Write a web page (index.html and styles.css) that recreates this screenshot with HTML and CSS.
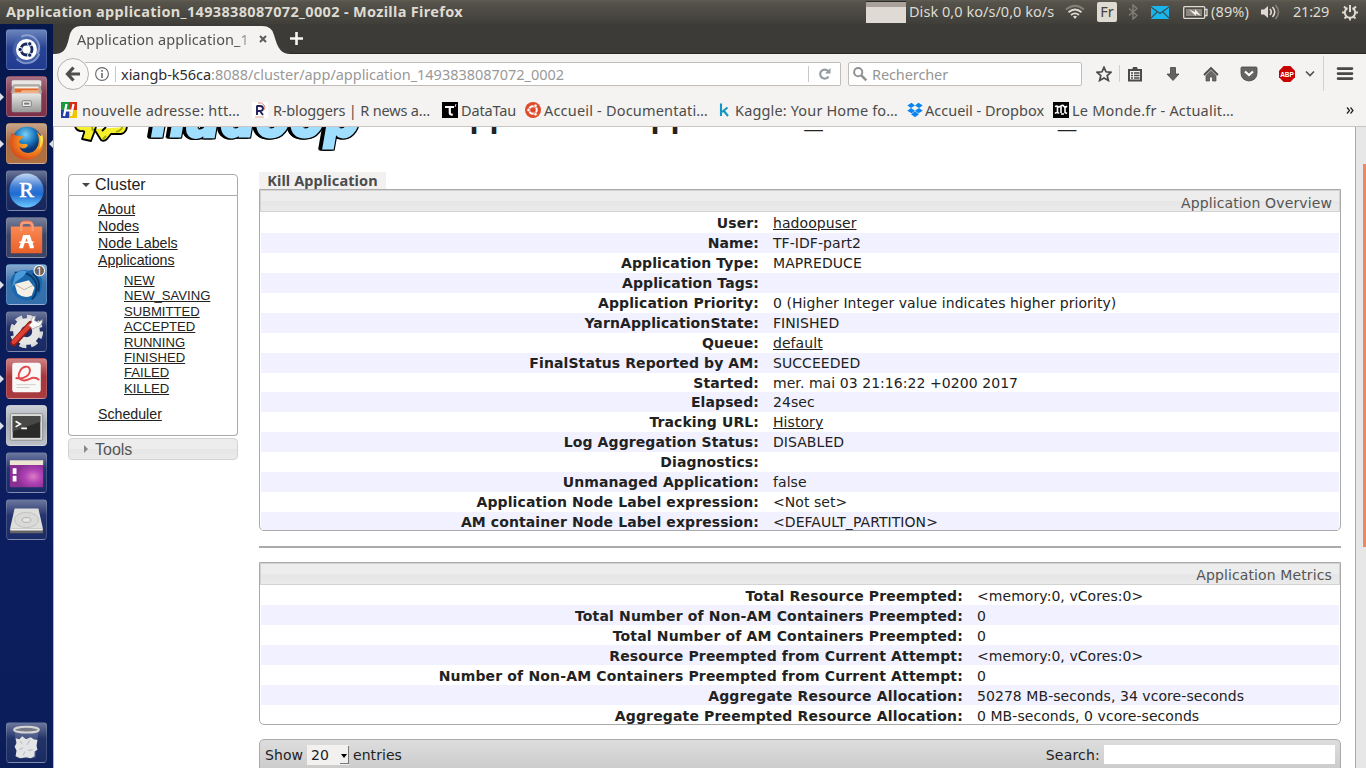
FILE: index.html
```html
<!DOCTYPE html>
<html lang="fr">
<head>
<meta charset="utf-8">
<title>Application application_1493838087072_0002 - Mozilla Firefox</title>
<link rel="stylesheet" href="styles.css">
</head>
<body>
<header class="panel">
  <span class="panel-title">Application application_1493838087072_0002 - Mozilla Firefox</span>
  <div class="indicators">
    <span class="graph"></span>
    <span class="disk">Disk 0,0 ko/s/0,0 ko/s</span>
    <svg class="wifi" width="20" height="16" viewBox="0 0 20 16" fill="none" stroke-width="1.8"><path d="M1 5.5Q10-2 19 5.5" stroke="#858179"/><path d="M3.500 8.300Q10 2.800 16.500 8.300M6 11Q10 7.700 14 11" stroke="#dfdbd2"/><path d="M8 12.500Q10 11 12 12.500L10 15z" fill="#dfdbd2"/></svg>
    <span class="keyboard">Fr</span>
    <svg class="bluetooth" width="10" height="16" viewBox="0 0 10 16" fill="none" stroke="#817e76" stroke-width="1.4"><path d="M1 4.500l8 7L5 15V1l4 3.500-8 7"/></svg>
    <svg class="mail" width="18" height="13" viewBox="0 0 18 13"><path d="M0 0h18v13H0z" fill="#19b6ee"/><path d="M0 1l9 6.500L18 1M0 12l6-6M18 12l-6-6" fill="none" stroke="#3c4a4d" stroke-width="1.1"/></svg>
    <svg class="battery" width="25" height="13" viewBox="0 0 25 13"><rect x=".7" y=".7" width="21" height="11.600" rx="1" fill="none" stroke="#dfdbd2" stroke-width="1.300"/><path d="M3 3h16v7H3z" fill="#8b877f"/><path d="M22 3.500h2v6h-2" fill="none" stroke="#dfdbd2" stroke-width="1.300"/><path d="M6 3.500l6 2.500V3l6 7-5-2.300V10z" fill="#f2eee6"/></svg>
    <span class="charge">(89%)</span>
    <svg class="volume" width="20" height="16" viewBox="0 0 20 16" fill="none" stroke-width="1.600"><path d="M0 5.500h3L7 2v12l-4-3.500H0z" fill="#dfdbd2"/><path d="M9 5q2.500 3 0 6M11.500 3q4.500 5 0 10" stroke="#dfdbd2"/><path d="M14.500 1q6 7 0 14" stroke="#858179"/></svg>
    <span class="clock">21:29</span>
    <svg class="session" width="16" height="17" viewBox="0 0 16 17" fill="none" stroke="#dfdbd2"><path d="M5.500 4a5.200 5.200 0 1 0 5 0" stroke-width="2"/><path d="M8 1v7" stroke-width="2"/><path d="M2 2.500l2 2M14 2.500l-2 2M0 8.500h3M13 8.500h3M2.500 14.500l2-2M13.500 14.500l-2-2M8 13v3.500" stroke-width="1.800"/></svg>
  </div>
</header>

<div class="desktop">
<nav class="launcher">
  <svg width="0" height="0" class="defs"><defs>
    <linearGradient id="metal" x2="0" y2="1"><stop offset="0" stop-color="#e8e8e6"/><stop offset="1" stop-color="#999"/></linearGradient>
    <radialGradient id="fox" cx=".65" cy=".35" r=".7"><stop offset="0" stop-color="#ffd23d"/><stop offset=".5" stop-color="#f58a1f"/><stop offset="1" stop-color="#d9481a"/></radialGradient>
    <radialGradient id="globe" cx=".45" cy=".25"><stop offset="0" stop-color="#7cd0f4"/><stop offset=".6" stop-color="#1e7cc2"/><stop offset="1" stop-color="#0a3877"/></radialGradient>
    <linearGradient id="ball" x2="0" y2="1"><stop offset="0" stop-color="#c5d9f4"/><stop offset=".4" stop-color="#3d7cd4"/><stop offset=".6" stop-color="#1e6bd0"/><stop offset="1" stop-color="#6cc8ff"/></linearGradient>
    <linearGradient id="bag" x2="0" y2="1"><stop offset="0" stop-color="#f98a52"/><stop offset="1" stop-color="#e9602a"/></linearGradient>
    <radialGradient id="purple" cx=".7" cy=".6"><stop offset="0" stop-color="#dc7cc4"/><stop offset=".5" stop-color="#b043b4"/><stop offset="1" stop-color="#8a2f94"/></radialGradient>
  </defs></svg>
  <div class="tile dash"><svg viewBox="0 0 41 41"><path d="M7 25C3 10 18 2 26 7c9 3 12 14 6 22-5 8-18 8-23-1" fill="#4d6bb0" opacity=".75"/><path d="M15 7c12-5 23 6 17 18M10 30c8 9 20 5 24-5" fill="none" stroke="#b4c5e6" stroke-width="2" opacity=".6"/><circle cx="20.500" cy="20.500" r="11" fill="#fff"/><circle cx="20.500" cy="20.500" r="5.800" fill="none" stroke="#17295f" stroke-width="3"/><g fill="#17295f" stroke="#fff" stroke-width="1"><circle cx="13.800" cy="20.500" r="2.300"/><circle cx="23.900" cy="14.600" r="2.300"/><circle cx="23.900" cy="26.400" r="2.300"/></g></svg></div>
  <div class="tile files running"><svg viewBox="0 0 41 41"><path d="M7 4h27l3 13H4z" fill="#aaa9a5"/><path d="M8 10h25v7H8z" fill="#f5ede0"/><path d="M8 12h25v5H8z" fill="#e2692d"/><path d="M6 16h8l2-2h17v3H6z" fill="#efb287"/><path d="M5 4.500q0-1 2-1h27q2 0 2 1v6l-2-3H7l-2 3z" fill="#e7e6e3"/><rect x="5" y="17" width="31" height="20" rx="1.500" fill="url(#metal)"/><rect x="16" y="25" width="9.500" height="6" rx="1" fill="#eee" stroke="#777"/><path d="M18 27h5.500v2H18z" fill="#777"/></svg></div>
  <div class="tile firefox running active"><svg viewBox="0 0 41 41"><circle cx="21" cy="19" r="16" fill="url(#globe)"/><path d="M5 9c1 1 3 3 5 3l7 1c-1 3-5 4-4 7 3 2 7 0 9 2-2 5-8 4-9 2 3 8 12 8 17 3 5-5 4-14 1-19 6 5 8 11 6 18-5 14-24 15-31 4C2 24 3 15 5 9z" fill="url(#fox)"/><path d="M32 9c4 5 4 13 1 18 5-5 6-10 4-16l-2 2z" fill="#ffe04a"/></svg></div>
  <div class="tile rstudio"><svg viewBox="0 0 41 41"><circle cx="20.500" cy="20.500" r="18" fill="url(#ball)"/><text x="20.500" y="27.500" text-anchor="middle" class="r-letter">R</text></svg></div>
  <div class="tile software"><svg viewBox="0 0 41 41"><path d="M15 12V7q1-3 4-3h3q4 0 4 4v4" fill="none" stroke="#ed6c43" stroke-width="3"/><path d="M4 9h33v28H4z" fill="url(#bag)"/><path d="M15 14V8q0-3 3-3h5q4 0 4 4v5" fill="none" stroke="#f49b79" stroke-width="2.500"/><path d="M17 18h7l4.500 13H24l-3.500-10L17 31h-4z" fill="#fff"/><path d="M13 25.500h15M13 31h4M24 31h4" stroke="#fff" stroke-width="1.800"/></svg></div>
  <div class="tile thunderbird running"><svg viewBox="0 0 41 41"><path d="M4 20C2 11 13 3 22 6c13-4 18 11 13 22-5 11-21 12-27 3-2-3-4-7-4-11z" fill="#1a67ab"/><path d="M8 8c9 0 14-1 21 8 4 6 2 16-3 20M27 9c6 4 8 10 6 19" fill="none" stroke="#0a3768" stroke-width="2"/><path d="M8 20l15-4 6 8-3 8q-8 4-15-2z" fill="#f4f0e6"/><path d="M8 20l10 6 10-5" fill="none" stroke="#b7b2a8"/><path d="M9 9q6-5 12-2l-4 5-8 6-4 6z" fill="#4a9bdb"/><circle cx="34" cy="6" r="5.500" fill="#66645e" stroke="#eee" stroke-width="1.200"/><text x="34" y="10" text-anchor="middle" class="count">1</text></svg></div>
  <div class="tile settings"><svg viewBox="0 0 41 41"><circle cx="20.500" cy="20.500" r="15" fill="none" stroke="#d9dad9" stroke-width="5" stroke-dasharray="7 4.781"/><circle cx="20.500" cy="20.500" r="10" fill="none" stroke="#e6e6e4" stroke-width="8"/><path d="M7 32.500L25 13" stroke="#891e16" stroke-width="7" stroke-linecap="round"/><path d="M7 31.500L24 14" stroke="#df3f34" stroke-width="4.500" stroke-linecap="round"/><path d="M23 14l3-3q-1-6 4-7l-1 5 4 2 4-3q1 7-7 8l-3 2z" fill="#fafafa" stroke="#999" stroke-width=".8"/></svg></div>
  <div class="tile evince running"><svg viewBox="0 0 41 41"><rect x="5.500" y="4" width="30" height="31" rx="3" fill="#f9f8f6"/><path d="M9 20c10 2 16-4 15-9-1-5-8-3-10 1-5 9 2 13 10 9q5-3 10 1" fill="none" stroke="#e1494b" stroke-width="2"/><path d="M10 27h20M10 30h14" stroke="#ccc" stroke-width="1"/></svg></div>
  <div class="tile terminal running"><svg viewBox="0 0 41 41"><rect x="3.500" y="8" width="34" height="28" rx="1" fill="#dcdcda" stroke="#8e8e8c"/><path d="M6 10.500h29v23H6z" fill="#2b2b2a"/><path d="M6 10.500h29v6L6 27z" fill="#484846"/><path d="M9 16l5 3-5 3M15 23.500h6" fill="none" stroke="#fff" stroke-width="1.700"/></svg></div>
  <div class="tile workspace"><svg viewBox="0 0 41 41"><rect x="3" y="8" width="35" height="28" rx="1" fill="url(#purple)"/><path d="M3 7.500h35v5H3z" fill="#ebe5d2"/><path d="M6 16h4v6H6zM6 24h4v6H6z" fill="#fff"/></svg></div>
  <div class="tile disk-drive"><svg viewBox="0 0 41 41"><path d="M8 9h25l5 22H3z" fill="#dededc"/><path d="M3 30h35v4q0 1-1 1H4q-1 0-1-1z" fill="#666"/><path d="M3 30h35l-1 2H4z" fill="#f1f1f0"/><ellipse cx="20.500" cy="21" rx="12.500" ry="8" fill="#d9d9d7" stroke="#c0c0be"/><ellipse cx="20.500" cy="21" rx="4.500" ry="2.500" fill="#e7e7e6" stroke="#aaa"/></svg></div>
  <div class="tile trash"><svg viewBox="0 0 41 41"><path d="M8 9l3 28h19l3-28z" fill="#a9b2cb" opacity=".25"/><path d="M9 16l4 1 3-3 4 3 5-2 3 2 4 1-1 6 1 4-3 2v5l-4 2-5-1-6 1-5-2 1-6-2-4 2-4z" fill="#e3e4e5"/><path d="M14 19l2 3M24 18l-3 5M13 28l4-2M22 29l5-1M17 34l2-4" fill="none" stroke="#c0c2c6" stroke-width="1.200"/><ellipse cx="20.500" cy="7" rx="13" ry="3" fill="#777b87" stroke="#d5d6d4" stroke-width="2.200"/></svg></div>
</nav>

<div class="browser">
  <div class="tabs">
    <svg class="tab-shape" width="244" height="30" viewBox="0 0 244 30"><path d="M0 30C11 30 13 26 16 14Q18 2 28 2H209Q219 2 221 11C225 25 228 30 238 30z" fill="#f4f3f1"/></svg>
    <span class="tab-title">Application application_1</span>
    <svg class="tab-close" width="8" height="8" viewBox="0 0 8 8"><path d="M1 1l6 6M7 1L1 7" stroke="#5c5c5a" stroke-width="2"/></svg>
    <svg class="tab-new" width="13" height="13" viewBox="0 0 13 13"><path d="M6.500 0v13M0 6.500h13" stroke="#f5f5f3" stroke-width="2.600"/></svg>
  </div>
  <div class="navbar">
    <div class="back"><svg width="16" height="16" viewBox="0 0 16 16" fill="none" stroke="#4e4e4c" stroke-width="3.200"><path d="M8.500 1.500L2.500 8l6 6.500M3 8h12"/></svg></div>
    <div class="url">
      <svg width="14" height="14" viewBox="0 0 14 14" fill="none" stroke="#696968"><circle cx="7" cy="7" r="6.400" stroke-width="1.100"/><path d="M7 6v5M7 3v1.700" stroke-width="1.600"/></svg>
      <i class="bar"></i>
      <span class="address"><b>xiangb-k56ca</b>:8088/cluster/app/application_1493838087072_0002</span>
      <i class="bar bar-end"></i>
      <svg class="reload" width="12" height="12" viewBox="0 0 12 12"><path d="M9.500 8.500A4.500 4.500 0 1 1 9 3" fill="none" stroke="#919ba2" stroke-width="2.200"/><path d="M11.500 0v5.500H6z" fill="#919ba2"/></svg>
    </div>
    <div class="search"><svg width="14" height="14" viewBox="0 0 14 14" fill="none" stroke="#929292"><circle cx="5.200" cy="5.200" r="4.100" stroke-width="2"/><path d="M8.300 8.300l5 5" stroke-width="2.600"/></svg><span>Rechercher</span></div>
    <div class="tools">
      <svg width="16" height="16" viewBox="0 0 16 16"><path d="M8 1.300l2 4.500 5 .5-3.800 3.300 1.200 4.900L8 12l-4.400 2.500 1.200-4.900L1 6.300l5-.5z" fill="none" stroke="#494949" stroke-width="1.700"/></svg>
      <svg width="16" height="16" viewBox="0 0 16 16"><path d="M2 4h12v10.500H2z" fill="none" stroke="#4a4a4a" stroke-width="2"/><path d="M5 4l1-3h4l1 3z" fill="#4a4a4a"/><path d="M4 7h2M7 7h5.500M4 9.500h2M7 9.500h5.500M4 12h2M7 12h5.500" stroke="#4a4a4a" stroke-width="1.300"/></svg>
      <svg width="16" height="16" viewBox="0 0 16 16"><path d="M5.500 1.500h5V8H14l-6 6.500L2 8h3.500z" fill="#626262" stroke="#444" stroke-width=".8"/></svg>
      <svg width="16" height="16" viewBox="0 0 16 16"><path d="M1 9l7-7 7 7" fill="none" stroke="#4b4b4b" stroke-width="1.800"/><path d="M3 9.500l5-5 5 5V15H9.500v-4h-3v4H3z" fill="#686868" stroke="#4b4b4b" stroke-width=".7"/></svg>
      <svg width="18" height="16" viewBox="0 0 18 16"><path d="M2 1h14q1 0 1 1v5q0 7-8 8-8-1-8-8V2q0-1 1-1z" fill="#646464" stroke="#454545" stroke-width=".8"/><path d="M5 5.500L9 9l4-3.500" fill="none" stroke="#fff" stroke-width="2.200"/></svg>
      <svg width="16" height="16" viewBox="0 0 16 16"><path d="M4.700 0h6.600L16 4.700v6.600L11.300 16H4.700L0 11.300V4.700z" fill="#c80000"/><text x="8" y="10.600" text-anchor="middle" class="abp">ABP</text></svg>
      <svg width="10" height="8" viewBox="0 0 10 8"><path d="M1 1.500l4 4 4-4" fill="none" stroke="#505050" stroke-width="1.600"/></svg>
      <svg width="18" height="14" viewBox="0 0 18 14"><path d="M2 1.600h14M2 6.600h14M2 11.600h14" stroke="#484848" stroke-width="2.600" stroke-linecap="round"/></svg>
    </div>
  </div>
  <div class="bookmarks">
    <a class="bm b1"><svg viewBox="0 0 16 16"><path d="M0 0h8v8H0z" fill="#159b3b"/><path d="M8 0h8v8H8z" fill="#d92a14"/><path d="M0 8h8v8H0z" fill="#2440a8"/><path d="M8 8h8v8H8z" fill="#f0c600"/><path d="M5.500 2L3 14M12.500 2L10 14M4 8.500h8" stroke="#fff" stroke-width="2.200"/></svg><span>nouvelle adresse: htt…</span></a>
    <a class="bm b2"><svg viewBox="0 0 16 16"><path d="M0 0h16v16H0z" fill="#fff"/><path d="M5 3.500V13M5 4h3q3 0 3 2.500T8 9H5M8 9l3 4" fill="none" stroke="#20205c" stroke-width="1.900"/><path d="M6 1q4-1 6 2t0 5" fill="none" stroke="#dd8b68"/><path d="M3 15h9" stroke="#e0a48a"/></svg><span>R-bloggers | R news a…</span></a>
    <a class="bm b3"><svg viewBox="0 0 16 16"><path d="M0 0h16v16H0z" fill="#000"/><path d="M3 5h9M7.800 5v6q0 2 3 1.500" fill="none" stroke="#fff" stroke-width="2.200"/><path d="M14 2l-1 3" stroke="#ddd"/></svg><span>DataTau</span></a>
    <a class="bm b4"><svg viewBox="0 0 16 16"><circle cx="8" cy="8" r="8" fill="#df4a2a"/><circle cx="8" cy="8" r="3.800" fill="none" stroke="#fff" stroke-width="2"/><circle cx="3.500" cy="8" r="1.700" fill="#fff" stroke="#df4a2a" stroke-width=".7"/><circle cx="10.500" cy="3.800" r="1.700" fill="#fff" stroke="#df4a2a" stroke-width=".7"/><circle cx="10.500" cy="12.200" r="1.700" fill="#fff" stroke="#df4a2a" stroke-width=".7"/></svg><span>Accueil - Documentati…</span></a>
    <a class="bm b5"><svg viewBox="0 0 16 16"><path d="M5 1.500V14M11.500 5.500L6 10M7.500 8.500l4.500 5.500" fill="none" stroke="#1496c4" stroke-width="2.100"/></svg><span>Kaggle: Your Home fo…</span></a>
    <a class="bm b6"><svg viewBox="0 0 16 16"><path d="M4.500.8L8 3.400 4 6 .3 3.400zM11.500.8L8 3.400 12 6l3.700-2.600zM.3 8.700L4 6l4 2.700-3.500 2.600zM15.700 8.700L12 6 8 8.700l3.500 2.600zM4 12.300l4-3 4 3-4 2.900z" fill="#0a84ee"/></svg><span>Accueil - Dropbox</span></a>
    <a class="bm b7"><svg viewBox="0 0 16 16"><path d="M0 0h16v16H0z" fill="#050505"/><path d="M2 4.500q2-1 3 0t3-.5 3 .500 3-.5M4.500 4.500V10M8 4v7M12 4v6.500l2 1M2 11.500q2-2 4 0M8 12h3" fill="none" stroke="#fff" stroke-width="1.600"/></svg><span>Le Monde.fr - Actualit…</span></a>
    <svg class="overflow" width="8" height="7" viewBox="0 0 8 7"><path d="M1 .5l2.500 3L1 6.500M4.500.5l2.500 3-2.500 3" fill="none" stroke="#1d1d1d" stroke-width="1.200"/></svg>
  </div>

  <div class="viewport">
    <main class="page">
      <div class="masthead">
        <svg class="logo" width="300" height="24" viewBox="0 0 300 24">
          <path d="M7 0q3 5 7 4 3 0 2 2l-2 6 9 2 3-8 2-6M26 2l2 3 5 8q3 2 6-1l4-5 10 0q5-1 6-7M34 4l4-4" fill="#f5ef2c" stroke="#000" stroke-width="1.800" stroke-linejoin="round"/>
          <path d="M24 0l1 4M48 5q6-2 6-5M38 9l-3 3" fill="none" stroke="#a5a511" stroke-width="1.800"/>
          <text class="wordmark" x="83" y="9" textLength="209" lengthAdjust="spacingAndGlyphs">hadoop</text>
        </svg>
        <h1>Application application_1493838087072_0002</h1>
      </div>
      <div class="columns">
        <aside class="side">
          <div class="side-head"><i class="down"></i>Cluster</div>
          <div class="side-body">
            <a>About</a><a>Nodes</a><a>Node Labels</a><a>Applications</a>
            <div class="states"><a>NEW</a><a>NEW_SAVING</a><a>SUBMITTED</a><a>ACCEPTED</a><a>RUNNING</a><a>FINISHED</a><a>FAILED</a><a>KILLED</a></div>
            <a>Scheduler</a>
          </div>
          <div class="side-tools"><i class="right"></i>Tools</div>
        </aside>
        <section class="content">
          <button class="kill">Kill Application</button>
          <div class="box overview">
            <div class="box-head">Application Overview</div>
            <dl>
              <div><dt>User:</dt><dd><a>hadoopuser</a></dd></div>
              <div><dt>Name:</dt><dd>TF-IDF-part2</dd></div>
              <div><dt>Application Type:</dt><dd>MAPREDUCE</dd></div>
              <div><dt>Application Tags:</dt><dd></dd></div>
              <div><dt>Application Priority:</dt><dd>0 (Higher Integer value indicates higher priority)</dd></div>
              <div><dt>YarnApplicationState:</dt><dd>FINISHED</dd></div>
              <div><dt>Queue:</dt><dd><a>default</a></dd></div>
              <div><dt>FinalStatus Reported by AM:</dt><dd>SUCCEEDED</dd></div>
              <div><dt>Started:</dt><dd>mer. mai 03 21:16:22 +0200 2017</dd></div>
              <div><dt>Elapsed:</dt><dd>24sec</dd></div>
              <div><dt>Tracking URL:</dt><dd><a>History</a></dd></div>
              <div><dt>Log Aggregation Status:</dt><dd>DISABLED</dd></div>
              <div><dt>Diagnostics:</dt><dd></dd></div>
              <div><dt>Unmanaged Application:</dt><dd>false</dd></div>
              <div><dt>Application Node Label expression:</dt><dd>&lt;Not set&gt;</dd></div>
              <div><dt>AM container Node Label expression:</dt><dd>&lt;DEFAULT_PARTITION&gt;</dd></div>
            </dl>
          </div>
          <hr>
          <div class="box metrics">
            <div class="box-head">Application Metrics</div>
            <dl>
              <div><dt>Total Resource Preempted:</dt><dd>&lt;memory:0, vCores:0&gt;</dd></div>
              <div><dt>Total Number of Non-AM Containers Preempted:</dt><dd>0</dd></div>
              <div><dt>Total Number of AM Containers Preempted:</dt><dd>0</dd></div>
              <div><dt>Resource Preempted from Current Attempt:</dt><dd>&lt;memory:0, vCores:0&gt;</dd></div>
              <div><dt>Number of Non-AM Containers Preempted from Current Attempt:</dt><dd>0</dd></div>
              <div><dt>Aggregate Resource Allocation:</dt><dd>50278 MB-seconds, 34 vcore-seconds</dd></div>
              <div><dt>Aggregate Preempted Resource Allocation:</dt><dd>0 MB-seconds, 0 vcore-seconds</dd></div>
            </dl>
          </div>
          <div class="table-bar">
            <span>Show</span><span class="select">20<i></i></span><span>entries</span>
            <span class="filter">Search:</span><span class="field"></span>
          </div>
        </section>
      </div>
    </main>
    <div class="scrollbar"><div class="thumb"></div></div>
  </div>
</div>
</div>
</body>
</html>
```
FILE: styles.css
```css
* { box-sizing: border-box; }
body { margin: 0; width: 1366px; height: 768px; overflow: hidden; display: flex; flex-direction: column; background: #fff; font-family: "Noto Sans", "Open Sans", sans-serif; font-size: 14.5px; }
svg { display: block; flex: none; }
span, a { white-space: nowrap; }

/* top panel */
.panel { height: 24px; flex: none; display: flex; align-items: center; justify-content: space-between; padding: 0 8px 0 6px; color: #dfdbd2; background: linear-gradient(#5f5d53, #55534a 10%, #3f3e39); }
.panel-title { font-weight: 700; letter-spacing: .33px; line-height: 22px; height: 24px; }
.indicators { display: flex; align-items: center; height: 24px; }
.indicators span { height: 24px; line-height: 22px; }
.indicators .graph { width: 40px; height: 22px; background: linear-gradient(#a8a29b 5px, #dfdbd4 5px); border-top: 1px solid #2b2a28; }
.disk { margin-left: 3px; width: 146px; letter-spacing: .04px; }
.wifi { margin-left: 10px; }
.indicators .keyboard { margin-left: 12px; width: 20px; height: 20px; border-radius: 2px; background: #dfdbd2; color: #45433d; line-height: 19px; text-align: center; }
.bluetooth { margin-left: 11px; }
.mail { margin-left: 13px; }
.battery { margin-left: 14px; }
.charge { margin-left: 3px; width: 38px; letter-spacing: .13px; }
.volume { margin-left: 12px; }
.clock { margin-left: 12px; width: 37px; letter-spacing: -.2px; }
.session { margin-left: 12px; }

.desktop { flex: 1; display: flex; min-height: 0; }

/* launcher */
.launcher { width: 53px; flex: none; padding: 5px 6px 5px; display: flex; flex-direction: column; gap: 6px; background: linear-gradient(#06174c, #0c1e60 60%, #0b1d59); }
.defs { position: absolute; }
.tile { position: relative; width: 41px; height: 41px; flex: none; border-radius: 4px; border: 1px solid rgba(255,255,255,.16); background: linear-gradient(rgba(255,255,255,.4), rgba(255,255,255,.1) 40%, rgba(255,255,255,.06)); }
.tile svg { width: 39px; height: 39px; }
.dash { background: linear-gradient(#6b85bd, #2a4494 45%, #213b91); }
.files { background: linear-gradient(#a47084, #843a50 45%, #7d3149); }
.firefox { background: linear-gradient(#c6a48a, #a96c44 45%, #b1703f); }
.software { background: linear-gradient(#78819b, #3a4569 45%, #3b4364); }
.thunderbird { background: linear-gradient(#86a9ce, #3871ac 45%, #336fad); }
.evince { background: linear-gradient(#ce8184, #a4363c 45%, #a93a40); }
.terminal { background: linear-gradient(#ccd0d6, #a5aab5 45%, #bcc0c8); }
.trash { margin-top: auto; }
.running::before { content: ""; position: absolute; left: -7px; top: 16px; border: solid transparent; border-width: 4px 0 4px 4px; border-left-color: #dcdfe8; }
.active::after { content: ""; position: absolute; right: -7px; top: 16px; border: solid transparent; border-width: 4px 4px 4px 0; border-right-color: #dcdfe8; }
.r-letter { font: 23px "Liberation Serif", serif; fill: #fff; stroke: #fff; stroke-width: .7px; }
.count { font: 11px "Noto Sans", sans-serif; fill: #fff; }

/* browser chrome */
.browser { flex: 1; min-width: 0; display: flex; flex-direction: column; color: #4c4c4c; }
.tabs { height: 30px; flex: none; display: flex; align-items: center; background: #3c3b37; border-bottom: 1px solid #2a2926; padding-left: 24px; }
.tab-shape { margin-left: -24px; margin-right: -220px; }
.tab-title { width: 174px; line-height: 30px; letter-spacing: .07px; color: transparent; background: linear-gradient(90deg, #4c4c4c 160px, #d0d0cf 174px); background-clip: text; -webkit-background-clip: text; position: relative; }
.tab-close { margin-left: 8px; position: relative; }
.tab-new { margin-left: 23px; }
.navbar { height: 40px; flex: none; display: flex; align-items: center; background: #f4f3f1; padding-left: 4px; }
.back { width: 32px; height: 32px; flex: none; border: 1px solid #b5b2ae; border-radius: 50%; background: #f8f7f6; display: flex; align-items: center; justify-content: center; z-index: 1; }
.url { width: 756px; height: 24px; flex: none; margin-left: -4px; display: flex; align-items: center; padding: 0 9px 0 10px; border: 1px solid #c0bdb9; border-left: 0; background: #fff; color: #999; border-radius: 0 2px 2px 0; }
.bar { width: 1px; height: 16px; background: #cbc9c6; margin: 0 5px 0 6px; }
.bar-end { margin: 0 10px 0 auto; }
.address { letter-spacing: -.03px; }
.address b { font-weight: 400; color: #2e2e2e; }
.search { width: 234px; height: 24px; flex: none; margin-left: 7px; display: flex; align-items: center; gap: 5px; padding-left: 4px; border: 1px solid #c0bdb9; border-radius: 2px; background: #fff; color: #969696; letter-spacing: -.1px; }
.tools { flex: 1; display: grid; grid-template-columns: 24px 7px 38px 38px 38px 38px 23px 34px 16px; align-items: center; margin-left: 14px; background: linear-gradient(#d2d0cd, #d2d0cd) 23px 11px / 1px 17px no-repeat, linear-gradient(#d2d0cd, #d2d0cd) 227px 2px / 1px 35px no-repeat; align-self: stretch; }
.tools svg:nth-child(2) { grid-column: 3; }
.tools svg:nth-child(5) { margin-left: -1px; }
.tools svg:nth-child(7) { margin-left: 3px; }
.bookmarks { height: 33px; flex: none; background: #f4f3f1; border-bottom: 1px solid #c9c5c1; display: flex; align-items: center; padding-left: 8px; }
.abp { font: 700 6.5px "Liberation Sans", sans-serif; fill: #fff; }
.bm { display: flex; align-items: center; gap: 5px; height: 30px; flex: none; }
.bm span { padding-bottom: 1px; }
.bm svg { width: 16px; height: 16px; }
.b1 { width: 191px; letter-spacing: .22px; }
.b2 { width: 190px; letter-spacing: -.18px; }
.b3 { width: 83px; gap: 3px; letter-spacing: -.16px; }
.b4 { width: 191px; gap: 3px; letter-spacing: .19px; }
.b5 { width: 191px; gap: 3px; letter-spacing: .15px; }
.b6 { width: 146px; gap: 2px; }
.b7 { width: 200px; gap: 3px; letter-spacing: .2px; }
.overflow { margin-left: 93px; }

/* page */
.viewport { flex: 1; min-height: 0; display: flex; border-left: 1px solid #b9b7b8; background: #fff; }
.page { flex: 1; min-width: 0; overflow: hidden; padding: 0 14px; font-family: "DejaVu Sans", Verdana, sans-serif; font-size: 14px; letter-spacing: .06px; color: #222; }
.masthead { display: flex; height: 45px; overflow: hidden; }
.logo { width: 300px; }
.wordmark { font: italic 700 56px "DejaVu Sans", sans-serif; letter-spacing: 0; fill: #a0deff; stroke: #a0deff; stroke-width: 3px; filter: drop-shadow(1px 1px 0 #000) drop-shadow(-1px 0 0 #000) drop-shadow(-3px 0 0 #000); }
h1 { margin: -30px 0 0 78px; font: 700 32.6px/37px "Liberation Sans", Arial, sans-serif; letter-spacing: 0; white-space: nowrap; }
.columns { display: flex; gap: 21px; margin-top: 2px; }
.side { width: 170px; flex: none; font-family: "Liberation Sans", Arial, sans-serif; letter-spacing: 0; }
.side-head, .side-tools { height: 22px; border: 1px solid #aaa; font-size: 16px; line-height: 19px; display: flex; align-items: center; }
.side-head { border-radius: 4px 4px 0 0; padding-bottom: 2px; }
.side-tools { margin-top: 2px; border-color: #d3d3d3; border-radius: 4px; color: #555; background: linear-gradient(#ededed 50%, #e6e6e6 50%, #eaeaea); }
.down { width: 0; height: 0; border: 4px solid transparent; border-top-color: #454545; border-bottom: 0; margin: 2px 5px 0 13px; }
.right { width: 0; height: 0; border: 4px solid transparent; border-left-color: #888; border-right: 0; margin: 0 7px 0 15px; }
.side-body { height: 240px; border: 1px solid #aaa; border-top: 0; border-radius: 0 0 4px 4px; padding: 5px 0 0 29px; font-size: 14.2px; line-height: 17px; }
.side-body > a { display: block; }
.side-body a, dd a { text-decoration: underline; }
.states { padding: 4px 0 10px 26px; font-size: 13.1px; line-height: 15.4px; }
.states a { display: block; }
.content { width: 1082px; flex: none; }
.kill { display: block; width: 127px; height: 17px; margin: -2px 0 0; padding: 0; border: 0; background: #f2f1f0; color: #4c4c4c; font: 700 14.5px/17px "Noto Sans", sans-serif; letter-spacing: .12px; white-space: nowrap; }
.box { border: 1px solid #aaa; border-radius: 0 0 5px 5px; overflow: hidden; }
.overview { height: 342px; }
.metrics { height: 163px; }
.box-head { height: 22px; border: 1px solid #d3d3d3; background: linear-gradient(#ededed 50%, #e6e6e6 50%, #eaeaea); color: #555; text-align: right; padding-right: 7px; line-height: 24px; letter-spacing: .12px; }
.metrics .box-head { line-height: 22px; }
dl { margin: 0 1px; }
.overview dl { padding-top: 1px; }
dl > div { display: flex; height: 19.94px; line-height: 20px; }
.metrics dl > div { height: 19.95px; line-height: 22px; }
dl > div:nth-child(even) { background: #f1f1ff; }
dt { width: 498px; font-weight: 700; text-align: right; letter-spacing: .1px; white-space: nowrap; }
dd { margin: 0 0 0 14px; white-space: nowrap; }
.metrics dt { width: 702px; letter-spacing: .16px; }
hr { height: 2px; margin: 15px 0 14px; border: 0; background: #aaa; }
.table-bar { height: 40px; margin-top: 14px; padding: 0 5px; display: flex; align-items: flex-start; line-height: 30px; border: 1px solid #aaa; border-radius: 5px 5px 0 0; background: linear-gradient(#ddd, #cbcbcb 30px); }
.select { width: 42px; height: 20px; margin: 5px 4px 0 4px; padding-left: 4px; background: #f2f1f0; line-height: 20px; position: relative; }
.select i { position: absolute; right: 0; top: 1px; width: 9px; height: 18px; border-right: 1px solid #777; border-bottom: 1px solid #777; }
.select i::before { content: ""; position: absolute; left: 1px; top: 8px; border: 3px solid transparent; border-top: 4px solid #000; border-bottom: 0; }
.filter { margin-left: auto; letter-spacing: .2px; }
.field { width: 231px; height: 19px; margin: 5px 0 0 4px; background: #fff; }
.scrollbar { width: 11px; flex: none; border-left: 1px solid #aaa; background: #e7e7e7; }
.thumb { width: 3px; height: 383px; margin: 37px 0 0 auto; background: #f08763; }
```
